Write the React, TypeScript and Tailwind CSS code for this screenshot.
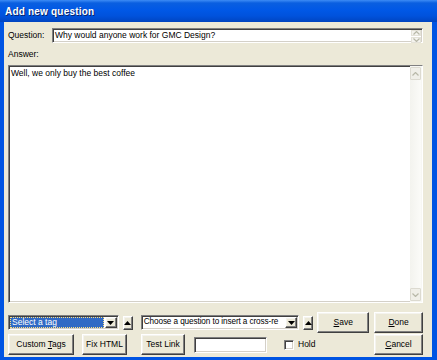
import React from "react";

const raised =
  "border border-t-white border-l-white border-b-[#404040] border-r-[#404040] shadow-[inset_-1px_-1px_0_#808080,inset_1px_1px_0_#f4f3ee] bg-[#ece9d8]";
const sunken =
  "border border-t-[#808080] border-l-[#808080] border-b-white border-r-white shadow-[inset_1px_1px_0_#404040,inset_-1px_-1px_0_#d4d0c8]";

function Tri({ up = false }: { up?: boolean }) {
  return (
    <svg width="7" height="4" viewBox="0 0 7 4">
      {up ? <polygon points="0,4 7,4 3.5,0" fill="#000" /> : <polygon points="0,0 7,0 3.5,4" fill="#000" />}
    </svg>
  );
}

function PaleTri({ up = false }: { up?: boolean }) {
  return (
    <svg width="7" height="4" viewBox="0 0 7 4">
      <polyline points={up ? "0.5,3.5 3.5,0.5 6.5,3.5" : "0.5,0.5 3.5,3.5 6.5,0.5"} fill="none" stroke="#b8b8a8" strokeWidth="1.2" />
    </svg>
  );
}

function SmallBtn({ up = false, className = "" }: { up?: boolean; className?: string }) {
  return (
    <div className={`${raised} flex items-center justify-center ${className}`}>
      <Tri up={up} />
    </div>
  );
}

function Btn({ label, u, w, className = "" }: { label: string; u?: number; w: string; className?: string }) {
  const text =
    u === undefined ? (
      label
    ) : (
      <>
        {label.slice(0, u)}
        <span className="underline">{label[u]}</span>
        {label.slice(u + 1)}
      </>
    );
  return (
    <div className={`${raised} ${w} h-[21px] flex items-center justify-center text-black ${className}`}>
      <span>{text}</span>
    </div>
  );
}

export default function App() {
  return (
    <div
      className="w-[437px] h-[360px] flex flex-col bg-[#0054e3] overflow-hidden"
      style={{ fontFamily: '"Liberation Sans", Arial, sans-serif' }}
    >
      {/* Title bar */}
      <div className="h-[22px] shrink-0 flex items-center pl-[5px] bg-[linear-gradient(to_bottom,#3d8cf5_0px,#0a5fe0_3px,#0058e6_10px,#0052dc_16px,#0044c0_22px)]">
        <span className="text-white font-bold text-[10px] tracking-[0.2px] [text-shadow:1px_1px_0_#0a246a]">
          Add new question
        </span>
      </div>
      {/* Body */}
      <div className="flex-1 ml-[4px] mr-[5px] mb-[3px] bg-[#ece9d8] flex flex-col text-[8.5px] text-black pl-[4px] pr-[9px]">
        {/* Question row */}
        <div className="flex items-center mt-[6px] h-[15px]">
          <span className="w-[44px] shrink-0">Question:</span>
          <div className={`${sunken} flex-1 h-[15px] bg-white flex items-center`}>
            <span className="pl-[2px] flex-1 leading-none">Why would anyone work for GMC Design?</span>
            <div className="w-[11px] h-full flex flex-col gap-[1px] py-[1px] pr-[1px]">
              <div className="flex-1 bg-[#f4f3ee] border border-[#e4e2d8] flex items-center justify-center">
                <PaleTri up />
              </div>
              <div className="flex-1 bg-[#f4f3ee] border border-[#e4e2d8] flex items-center justify-center">
                <PaleTri />
              </div>
            </div>
          </div>
        </div>
        {/* Answer label */}
        <div className="mt-[5px] h-[12px] leading-[12px]">Answer:</div>
        {/* Textarea */}
        <div className={`${sunken} mt-[5px] h-[238px] bg-white flex`}>
          <div className="flex-1 pl-[2px] pt-[2px] leading-[11px]">Well, we only buy the best coffee</div>
          <div className="w-[12px] h-full flex flex-col bg-[#f7f7f3] py-[1px] pr-[1px]">
            <div className="h-[13px] bg-[#f0efe8] border border-[#dcdad0] rounded-[1px] flex items-center justify-center">
              <PaleTri up />
            </div>
            <div className="flex-1 bg-[linear-gradient(to_right,#f3f3ee,#fbfbf8)]" />
            <div className="h-[13px] bg-[#f0efe8] border border-[#dcdad0] rounded-[1px] flex items-center justify-center">
              <PaleTri />
            </div>
          </div>
        </div>
        {/* Row 1 */}
        <div className="flex items-center mt-[9px] h-[21px]">
          <div className={`${sunken} w-[111px] h-[15px] bg-white flex items-center p-[1px]`}>
            <div className="flex-1 h-full bg-[#316ac5] text-white flex items-center pl-[2px] outline outline-1 outline-dotted outline-[#ffdf80] -outline-offset-1">
              Select a tag
            </div>
            <SmallBtn className="w-[12px] h-full ml-[1px]" />
          </div>
          <SmallBtn up className="w-[10px] h-[14px] ml-[4px]" />
          <div className={`${sunken} w-[159px] h-[15px] bg-white flex items-center p-[1px] ml-[8px]`}>
            <div className="flex-1 h-full flex items-center pl-[1px] overflow-hidden whitespace-nowrap text-[8.2px] tracking-[-0.1px]">
              Choose a question to insert a cross-re
            </div>
            <SmallBtn className="w-[12px] h-full ml-[1px]" />
          </div>
          <SmallBtn up className="w-[10px] h-[14px] ml-[4px]" />
          <Btn label="Save" u={0} w="w-[52px]" className="ml-[4px]" />
          <Btn label="Done" u={0} w="w-[49px]" className="ml-[5px]" />
        </div>
        {/* Row 2 */}
        <div className="flex items-center mt-[1px] h-[21px]">
          <Btn label="Custom Tags" u={7} w="w-[66px]" />
          <Btn label="Fix HTML" w="w-[45px]" className="ml-[8px]" />
          <Btn label="Test Link" w="w-[44px]" className="ml-[14px]" />
          <div className={`${sunken} w-[73px] h-[16px] bg-white ml-[9px]`} />
          <div className={`${sunken} w-[10px] h-[10px] bg-white ml-[17px]`} />
          <span className="ml-[4px]">Hold</span>
          <Btn label="Cancel" u={0} w="w-[49px]" className="ml-auto" />
        </div>
      </div>
    </div>
  );
}
